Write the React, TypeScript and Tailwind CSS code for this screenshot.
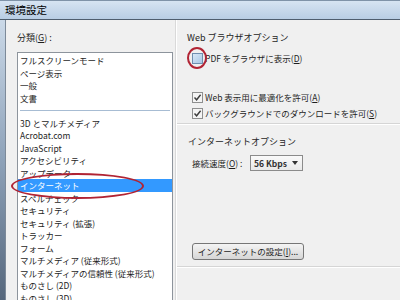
import React from 'react';

const categories = [
  'フルスクリーンモード',
  'ページ表示',
  '一般',
  '文書',
  '---',
  '3D とマルチメディア',
  'Acrobat.com',
  'JavaScript',
  'アクセシビリティ',
  'アップデーター',
  'インターネット',
  'スペルチェック',
  'セキュリティ',
  'セキュリティ (拡張)',
  'トラッカー',
  'フォーム',
  'マルチメディア (従来形式)',
  'マルチメディアの信頼性 (従来形式)',
  'ものさし (2D)',
  'ものさし (3D)',
];

const CheckBox = ({ checked }: { checked?: boolean }) => (
  <span
    className={`flex shrink-0 items-center justify-center w-[11px] h-[11px] border ${
      checked ? 'border-[#8e8f8f] bg-[#f4f4f4]' : 'border-[#6f8fb0] bg-gradient-to-br from-[#d8e8f6] to-[#a9c8e6]'
    }`}
  >
    {checked && (
      <svg width="9" height="9" viewBox="0 0 9 9">
        <path d="M1.5 4.5 L3.6 6.8 L7.6 1.8" fill="none" stroke="#3c3c3c" strokeWidth="1.4" />
      </svg>
    )}
  </span>
);

export default function App() {
  return (
    <div
      className="w-[400px] h-[300px] overflow-hidden flex flex-col bg-[#f0f0f0] text-[8.5px] text-[#1e1e1e] whitespace-nowrap"
      style={{ fontFamily: '"Noto Sans CJK JP", "Noto Sans", sans-serif' }}
    >
      {/* Title bar */}
      <div className="h-[20px] shrink-0 flex items-center pl-[5px] bg-gradient-to-b from-[#d6e4f2] to-[#b8cde4] border-t border-[#7f93a8] border-b border-b-[#4e5d6e] text-[10.5px] text-black">
        環境設定
      </div>

      <div className="flex flex-1 min-h-0">
        {/* Window frame */}
        <div className="w-[5px] shrink-0 bg-gradient-to-b from-[#cbd9e8] via-[#8ea2b9] to-[#56677c]" />
        <div className="w-px shrink-0 bg-[#7d8a99]" />

        {/* Category column */}
        <div className="pl-[11px] pt-[11px] shrink-0">
          <div className="leading-[14px] text-[9px]">分類(<span className="underline">G</span>) :</div>
          <div className="relative mt-[7px] w-[156px] h-[300px] bg-white border border-[#8d949c] pt-[1px]">
            {categories.map((c, i) =>
              c === '---' ? (
                <div key={i} className="h-[12.5px] flex items-center px-[2px]">
                  <div className="h-px w-full bg-[#a7bcd3]" />
                </div>
              ) : (
                <div
                  key={i}
                  className={`h-[12.5px] leading-[12.5px] px-[2px] ${
                    c === 'インターネット' ? 'bg-[#3399ff] text-white' : ''
                  }`}
                >
                  {c}
                </div>
              )
            )}
            <div className="absolute left-[-7px] top-[120px] w-[133px] h-[26px] rounded-[50%] border-2 border-[#b12434]" />
          </div>
        </div>

        {/* Options panel */}
        <div className="ml-[2px] flex-1 flex flex-col border-l border-[#d9d9d9]">
          <div className="border-l border-white flex-1 flex flex-col">
            <div className="pl-[10px] pt-[11px] pb-[3px]">
              <div className="leading-[14px] text-[9px]">Web ブラウザオプション</div>
              <div className="relative mt-[6px] h-[14px] flex items-center gap-[2px] pl-[5px]">
                <CheckBox />
                <span>PDF をブラウザに表示(<span className="underline">D</span>)</span>
                <div className="absolute left-0 top-[-4px] w-[20px] h-[22px] rounded-[50%] border-2 border-[#b12434]" />
              </div>
              <div className="mt-[25px] h-[14px] flex items-center gap-[2px] pl-[5px]">
                <CheckBox checked />
                <span>Web 表示用に最適化を許可(<span className="underline">A</span>)</span>
              </div>
              <div className="mt-[2px] h-[14px] flex items-center gap-[2px] pl-[5px]">
                <CheckBox checked />
                <span>バックグラウンドでのダウンロードを許可(<span className="underline">S</span>)</span>
              </div>
            </div>
            <div className="h-px bg-[#d5d5d5]" />
            <div className="h-px bg-white" />

            <div className="pl-[11px] pt-[10px] pb-[6px]">
              <div className="leading-[14px] text-[9px]">インターネットオプション</div>
              <div className="mt-[6px] flex items-center pl-[4px]">
                <span className="w-[58px]">接続速度(<span className="underline">O</span>) :</span>
                <div className="w-[53px] h-[16px] flex items-center justify-between border border-[#8b8b8b] bg-gradient-to-b from-[#fafafa] to-[#e9e9e9] pl-[3px] pr-[4px]">
                  <span className="font-bold text-[8.5px] text-[#333]">56 Kbps</span>
                  <svg width="6" height="4" viewBox="0 0 6 4">
                    <path d="M0 0 H6 L3 4 Z" fill="#333" />
                  </svg>
                </div>
              </div>
              <div className="mt-[72px] ml-[4px] w-[112px] h-[17px] flex items-center justify-center rounded-[3px] border border-[#767676] bg-gradient-to-b from-[#f4f4f4] to-[#d6d6d6]">
                インターネットの設定(<span className="underline">I</span>)...
              </div>
            </div>
            <div className="h-px bg-[#d5d5d5]" />
            <div className="h-px bg-white" />
          </div>
        </div>
      </div>
    </div>
  );
}
